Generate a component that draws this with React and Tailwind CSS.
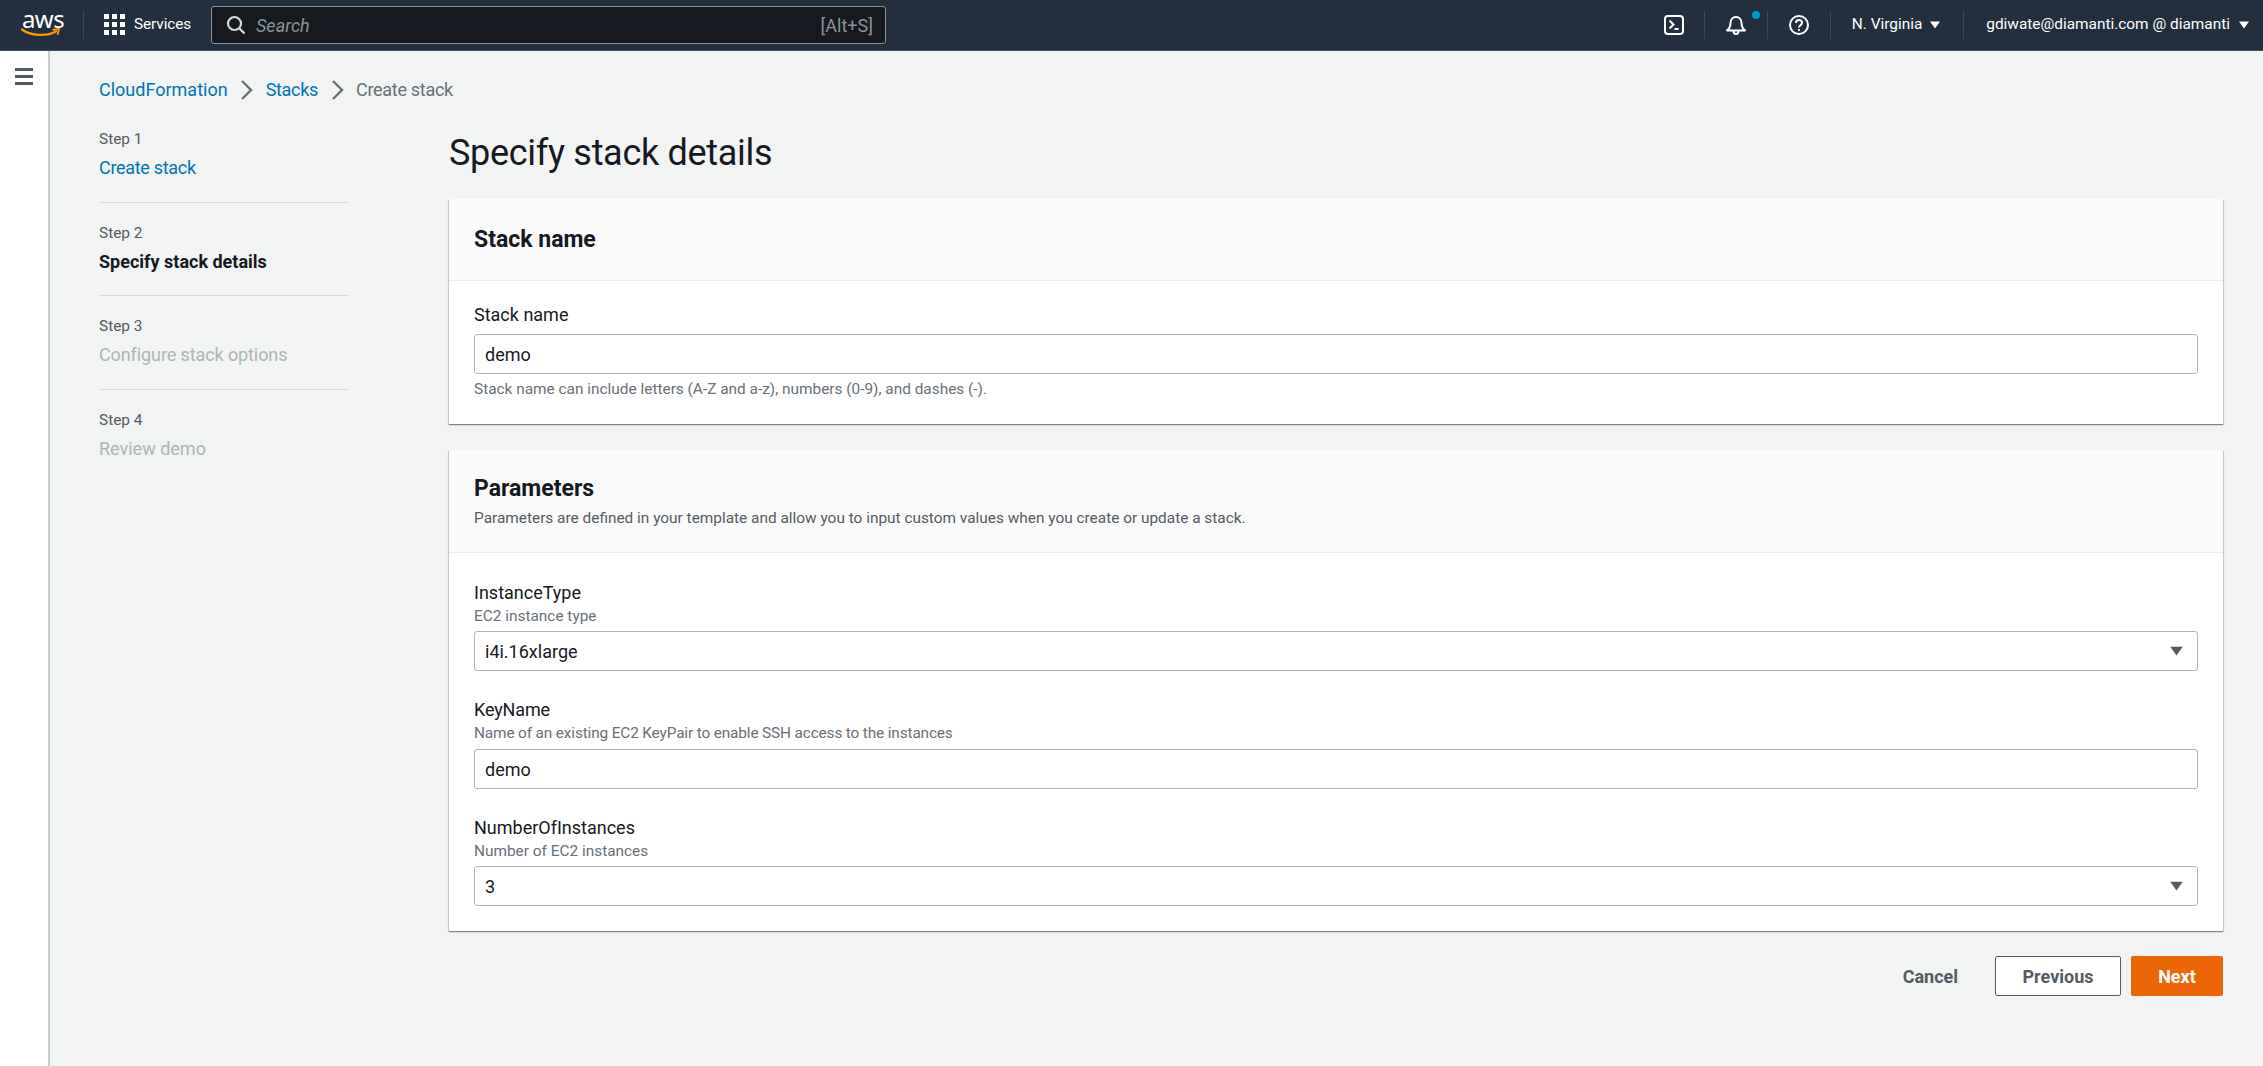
const sans = "font-['Roboto',sans-serif]";

function Sep() {
  return <div className="w-px h-[28px] bg-[#414750]" />;
}

function Caret({ className }) {
  return (
    <svg viewBox="0 0 10 8" className={className} fill="currentColor">
      <path d="M0 0.5h10L5 7.5z" />
    </svg>
  );
}

function Chevron() {
  return (
    <svg viewBox="0 0 13 22" className="w-[13px] h-[22px] mx-[12.500px]" fill="none" stroke="#687078" strokeWidth="2.4">
      <path d="M2 2l9 9-9 9" />
    </svg>
  );
}

function TopNav() {
  return (
    <header className="h-[51px] bg-[#232f3e] border-b border-[#414d5c] flex items-center text-white text-[15.4px] shrink-0">
      <div className="w-[83px] pl-[21px] flex flex-col items-start">
        <span className="font-['Noto_Sans',sans-serif] text-[24px] leading-[20px] -mt-[3px] ml-[1px] tracking-[-0.6px]">aws</span>
        <svg viewBox="0 0 40 10" className="w-[40px] h-[10px] -mt-[1px]" fill="none">
          <path d="M1 1.500C9 7.500 25 9 35 3.500" stroke="#f90" strokeWidth="2.2" strokeLinecap="round" />
          <path d="M31.500 2l6.500-1.200-1.400 6" stroke="#f90" strokeWidth="1.800" strokeLinejoin="round" />
        </svg>
      </div>
      <Sep />
      <div className="flex items-center gap-[9px] ml-[20px] w-[107px]">
        <div className="grid grid-cols-3 gap-[3px] w-[21px]">
          {[0, 1, 2, 3, 4, 5, 6, 7, 8].map((i) => (
            <span key={i} className="w-[5px] h-[5px] bg-white" />
          ))}
        </div>
        <span className="tracking-[-0.1px]">Services</span>
      </div>
      <div className="w-[675px] h-[38px] bg-[#16191f] border border-[#879596] rounded-[3px] flex items-center pl-[14px] pr-[12px]">
        <svg viewBox="0 0 20 20" className="w-[20px] h-[20px]" fill="none" stroke="#d5dbdb" strokeWidth="2.2">
          <circle cx="8.500" cy="8.500" r="6.500" />
          <path d="M13.500 13.500l5 5" />
        </svg>
        <span className="italic text-[#879596] text-[18px] ml-[10px]">Search</span>
        <span className="ml-auto text-[#879596] text-[18px]">[Alt+S]</span>
      </div>
      <div className="ml-auto flex items-center">
        <svg viewBox="0 0 20 20" className="w-[20px] h-[20px]" fill="none" stroke="white" strokeWidth="2">
          <rect x="1" y="1" width="18" height="18" rx="3" />
          <path d="M5.500 5.500l4 4-4 4M10.500 14h4" />
        </svg>
        <div className="ml-[20px]"><Sep /></div>
        <div className="relative w-[62px] flex justify-center">
          <svg viewBox="0 0 20 20" className="w-[20px] h-[20px]" fill="none" stroke="white" strokeWidth="2">
            <path d="M1 15.500h18c-2.500-2-3.500-4.500-3.500-7.500 0-3.500-2.300-6-5.500-6S4.500 4.500 4.500 8c0 3-1 5.500-3.500 7.500z" strokeLinejoin="round" />
            <path d="M7.500 16c0 2 1 3 2.500 3s2.500-1 2.500-3" />
          </svg>
          <span className="absolute left-[47px] -top-[4px] w-[8px] h-[8px] rounded-full bg-[#0099cc]" />
        </div>
        <Sep />
        <svg viewBox="0 0 20 20" className="w-[20px] h-[20px] ml-[21px]" fill="none" stroke="white" strokeWidth="2">
          <circle cx="10" cy="10" r="9" />
          <path d="M7 8c0-2 1.300-3 3-3s3 1 3 2.800c0 2.400-3 2.400-3 4.700" />
          <path d="M10 14v1.800" />
        </svg>
        <div className="ml-[21px]"><Sep /></div>
        <span className="ml-[21px]">N. Virginia</span>
        <Caret className="w-[10px] h-[8px] ml-[8px] mr-[23px]" />
        <Sep />
        <span className="ml-[22px]">gdiwate@diamanti.com @ diamanti</span>
        <Caret className="w-[10px] h-[8px] ml-[9px] mr-[14px]" />
      </div>
    </header>
  );
}

function StepItem({ step, label, tone, last }) {
  return (
    <div className={last ? "h-[60px]" : "h-[73.5px] border-b border-[#d5dbdb] mb-[20px]"}>
      <div className="text-[15.4px] leading-[20px] text-[#545b64]">{step}</div>
      <div className={`text-[18px] leading-[24px] mt-[7px] ${tone}`}>{label}</div>
    </div>
  );
}

function Field({ label, desc, hint, value, select, descClass, boxGap }) {
  return (
    <div>
      <div className={`text-[18px] leading-[24px] text-[#16191f] ${descClass || ""}`}>{label}</div>
      {desc && <div className={`text-[15.4px] leading-[20px] text-[#687078] mt-[1px] ${descClass || ""}`}>{desc}</div>}
      <div className={`h-[40px] ${boxGap || "mt-[5px]"} bg-white border border-[#aab7b8] rounded-[3px] flex items-center justify-between pl-[10px] pr-[14px] text-[18px] text-[#16191f]`}>
        <span>{value}</span>
        {select && <Caret className="w-[13px] h-[10px] text-[#545b64]" />}
      </div>
      {hint && <div className="text-[15.4px] leading-[20px] text-[#687078] mt-[5px]">{hint}</div>}
    </div>
  );
}

function Card({ title, sub, head, children }) {
  return (
    <section className="bg-white shadow-[0_1px_1px_0_rgba(0,28,36,0.3),1px_1px_1px_0_rgba(0,28,36,0.15),-1px_1px_1px_0_rgba(0,28,36,0.15)]">
      <div className={`${head} bg-[#fafafa] border-b border-[#eaeded] px-[25px] flex flex-col justify-center`}>
        <h2 className="text-[23px] leading-[30px] font-bold text-[#16191f]">{title}</h2>
        {sub && <p className="text-[15.4px] leading-[20px] text-[#545b64] mt-[4px]">{sub}</p>}
      </div>
      {children}
    </section>
  );
}

export default function App() {
  return (
    <div className={`${sans} w-full h-[1066px] overflow-hidden flex flex-col bg-[#f2f3f3]`}>
      <TopNav />
      <div className="flex flex-1 min-h-0">
        <aside className="w-[50px] bg-white border-r-2 border-[#c6cbcb] shrink-0 pt-[17px] pl-[15px]">
          <div className="w-[18px] flex flex-col gap-[4px]">
            <span className="h-[3px] bg-[#545b64]" />
            <span className="h-[3px] bg-[#545b64]" />
            <span className="h-[3px] bg-[#545b64]" />
          </div>
        </aside>
        <main className="flex-1 pl-[49px] pr-[40px] pt-[27px]">
          <nav className="flex items-center text-[18px] leading-[24px] h-[24px]">
            <span className="text-[#0073bb]">CloudFormation</span>
            <Chevron />
            <span className="text-[#0073bb] tracking-[-0.3px]">Stacks</span>
            <Chevron />
            <span className="text-[#687078] tracking-[-0.3px]">Create stack</span>
          </nav>
          <div className="flex mt-[27px]">
            <div className="w-[250px] shrink-0">
              <StepItem step="Step 1" label="Create stack" tone="text-[#0073bb] tracking-[-0.3px]" />
              <StepItem step="Step 2" label="Specify stack details" tone="text-[#16191f] font-bold" />
              <StepItem step="Step 3" label="Configure stack options" tone="text-[#aab7b8] tracking-[-0.1px]" />
              <StepItem step="Step 4" label="Review demo" tone="text-[#aab7b8]" last />
            </div>
            <div className="flex-1 ml-[100px]">
              <h1 className="text-[36px] leading-[46px] font-normal tracking-[-0.3px] pt-[1px] -mb-[1px] text-[#16191f]">Specify stack details</h1>
              <div className="mt-[24px] flex flex-col gap-[26px]">
                <Card title="Stack name" head="h-[82px]">
                  <div className="px-[25px] pt-[22px] pb-[25px]">
                    <Field label="Stack name" value="demo" boxGap="mt-[7px]" hint="Stack name can include letters (A-Z and a-z), numbers (0-9), and dashes (-)." />
                  </div>
                </Card>
                <Card title="Parameters" sub="Parameters are defined in your template and allow you to input custom values when you create or update a stack." head="h-[103px]">
                  <div className="px-[25px] pt-[28px] pb-[25px] flex flex-col gap-[27px]">
                    <Field label="InstanceType" desc="EC2 instance type" value="i4i.16xlarge" select />
                    <Field label="KeyName" desc="Name of an existing EC2 KeyPair to enable SSH access to the instances" value="demo" boxGap="mt-[6px]" descClass="tracking-[-0.15px]" />
                    <Field label="NumberOfInstances" desc="Number of EC2 instances" value="3" select />
                  </div>
                </Card>
              </div>
              <div className="mt-[25px] flex items-center justify-end">
                <span className="text-[18px] font-bold text-[#545b64]">Cancel</span>
                <button className="ml-[37px] w-[126px] h-[40px] border border-[#545b64] rounded-[2px] bg-white text-[18px] font-bold text-[#545b64]">Previous</button>
                <button className="ml-[10px] w-[92px] h-[40px] rounded-[2px] bg-[#ec6608] text-[18px] font-bold text-white">Next</button>
              </div>
            </div>
          </div>
        </main>
      </div>
    </div>
  );
}
